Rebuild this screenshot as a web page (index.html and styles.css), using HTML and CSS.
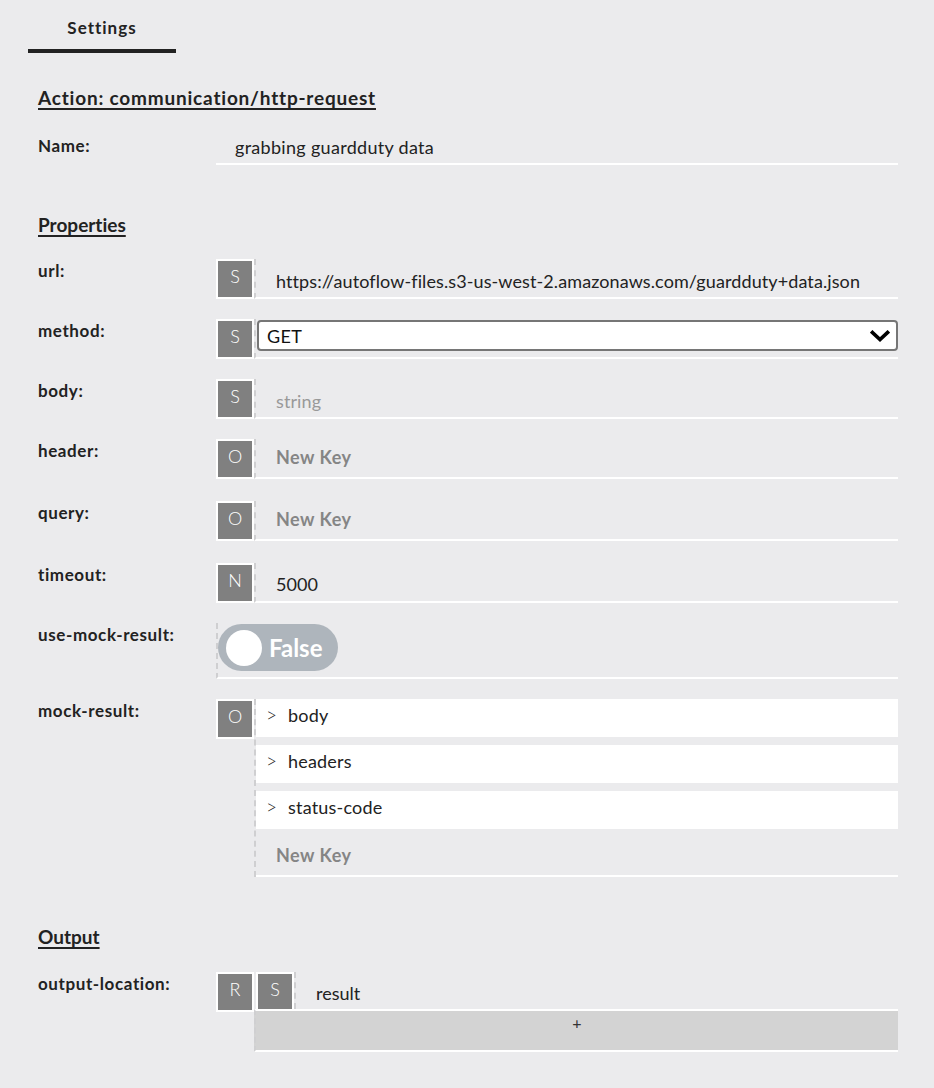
FILE: index.html
```html
<!DOCTYPE html>
<html lang="en">
<head>
<meta charset="utf-8">
<title>Settings</title>
<link rel="stylesheet" href="styles.css">
</head>
<body>
<div class="tabs"><div class="tab">Settings</div></div>
<div class="content">
  <h2 class="section-title action-title">Action: communication/http-request</h2>

  <div class="name-row">
    <div class="label">Name:</div>
    <div class="plain-field">grabbing guardduty data</div>
  </div>

  <h2 class="section-title props-title">Properties</h2>

  <div class="row">
    <div class="label">url:</div>
    <div class="control">
      <span class="badge">S</span>
      <div class="field text-field">https://autoflow-files.s3-us-west-2.amazonaws.com/guardduty+data.json</div>
    </div>
  </div>

  <div class="row">
    <div class="label">method:</div>
    <div class="control">
      <span class="badge">S</span>
      <div class="field select-field">
        <div class="select">
          <span>GET</span>
          <svg class="chevron" width="20" height="12" viewBox="0 0 20 12"><polyline points="2.5,2.5 10,9.5 17.5,2.5" fill="none" stroke="#000" stroke-width="3.6" stroke-linecap="square"/></svg>
        </div>
      </div>
    </div>
  </div>

  <div class="row">
    <div class="label">body:</div>
    <div class="control">
      <span class="badge">S</span>
      <div class="field text-field placeholder">string</div>
    </div>
  </div>

  <div class="row key-row">
    <div class="label">header:</div>
    <div class="control">
      <span class="badge">O</span>
      <div class="field key-field"><span class="new-key">New Key</span></div>
    </div>
  </div>

  <div class="row key-row">
    <div class="label">query:</div>
    <div class="control">
      <span class="badge">O</span>
      <div class="field key-field"><span class="new-key">New Key</span></div>
    </div>
  </div>

  <div class="row">
    <div class="label">timeout:</div>
    <div class="control">
      <span class="badge">N</span>
      <div class="field text-field num">5000</div>
    </div>
  </div>

  <div class="row">
    <div class="label">use-mock-result:</div>
    <div class="control">
      <div class="field toggle-field">
        <div class="toggle"><span class="knob"></span><span class="toggle-text">False</span></div>
      </div>
    </div>
  </div>

  <div class="row">
    <div class="label">mock-result:</div>
    <div class="control">
      <span class="badge">O</span>
      <div class="object-list">
        <div class="obj-item"><span class="caret">&gt;</span>body</div>
        <div class="obj-item"><span class="caret">&gt;</span>headers</div>
        <div class="obj-item"><span class="caret">&gt;</span>status-code</div>
        <div class="obj-new"><span class="new-key">New Key</span></div>
      </div>
    </div>
  </div>

  <h2 class="section-title output-title">Output</h2>

  <div class="row">
    <div class="label">output-location:</div>
    <div class="control">
      <span class="badge">R</span>
      <div class="out-col">
        <div class="out-top">
          <span class="badge">S</span>
          <div class="out-value">result</div>
        </div>
        <div class="add-bar">+</div>
      </div>
    </div>
  </div>
</div>
</body>
</html>
```

FILE: styles.css
```css
* { box-sizing: border-box; }

body {
  margin: 0;
  background: #ebebed;
  font-family: Lato, "Noto Sans", sans-serif;
  font-variant-ligatures: none;
  color: #222;
}

.tabs {
  padding-left: 28px;
  display: flex;
}

.tab {
  width: 148px;
  padding: 17px 0 10px;
  line-height: 22px;
  text-align: center;
  font-weight: 700;
  font-size: 17px;
  letter-spacing: 1px;
  color: #222;
  border-bottom: 4px solid #222;
}

.content {
  padding: 0 36px 40px 38px;
}

.section-title {
  margin: 0;
  font-size: 19px;
  line-height: 24px;
  font-weight: 700;
  text-decoration: underline;
  text-decoration-thickness: 2px;
  text-underline-offset: 3px;
  color: #222;
}

.action-title { margin-top: 33px; letter-spacing: 0.8px; }
.props-title { margin-top: 48px; margin-bottom: 22px; }
.output-title { margin-top: 48px; margin-bottom: 23px; }

.label {
  width: 178px;
  flex: none;
  font-size: 17px;
  font-weight: 700;
  letter-spacing: 0.6px;
  line-height: 24px;
  color: #222;
}

.name-row {
  display: flex;
  margin-top: 24px;
}

.plain-field {
  flex: 1;
  padding: 1px 0 4px 19px;
  line-height: 24px;
  font-size: 18px;
  letter-spacing: 0.3px;
  border-bottom: 2px solid #fff;
}

.row {
  display: flex;
  margin-bottom: 20px;
}

.row.key-row { margin-bottom: 22px; }

.control {
  flex: 1;
  display: flex;
  align-items: flex-start;
}

.badge {
  flex: none;
  width: 38px;
  height: 40px;
  border: 2px solid #fff;
  background: #808080;
  color: #fff;
  font-size: 18px;
  font-weight: 300;
  line-height: 30px;
  text-align: center;
}

.field {
  flex: 1;
  height: 40px;
  border-left: 2px dashed #cfcfd1;
  border-bottom: 2px solid #fff;
  font-size: 18px;
  line-height: 24px;
}

.text-field {
  padding: 10px 0 0 20px;
  white-space: nowrap;
  letter-spacing: 0.1px;
}

.text-field.num { padding-top: 9px; }

.placeholder { color: #999; }

.key-field { padding: 6px 0 0 20px; }

.new-key {
  color: #858585;
  font-weight: 700;
  font-size: 18px;
  letter-spacing: 0.5px;
}

.select-field {
  padding: 1px 0 0 1px;
}

.select {
  height: 31px;
  background: #fff;
  border: 2px solid #767676;
  border-radius: 4px;
  display: flex;
  align-items: center;
  justify-content: space-between;
  padding: 0 6px 0 8px;
  font-size: 18px;
  letter-spacing: 0.4px;
  color: #111;
}

.chevron { display: block; }

.toggle-field {
  height: 56px;
  padding: 1px 0 0 0;
  border-left: 2px dashed #cfcfd1;
}

.toggle {
  width: 120px;
  height: 47px;
  border-radius: 24px;
  background: #aeb5bc;
  display: flex;
  align-items: center;
  padding-left: 8px;
  gap: 7px;
}

.knob {
  width: 36px;
  height: 36px;
  border-radius: 50%;
  background: #fff;
  flex: none;
}

.toggle-text {
  color: #fff;
  font-weight: 700;
  font-size: 24px;
}

.object-list {
  flex: 1;
  display: flex;
  flex-direction: column;
  gap: 8px;
  border-left: 2px dashed #cfcfd1;
}

.obj-item {
  background: #fff;
  height: 38px;
  padding: 4px 0 0 10px;
  font-size: 18px;
  letter-spacing: 0.2px;
  line-height: 24px;
  color: #222;
}

.caret {
  display: inline-block;
  width: 22px;
  font-size: 19px;
  font-weight: 300;
}

.obj-new {
  height: 40px;
  padding: 6px 0 0 20px;
  line-height: 24px;
  border-bottom: 2px solid #fff;
}

.out-col {
  flex: 1;
  display: flex;
  flex-direction: column;
}

.out-top {
  display: flex;
  padding-left: 2px;
}

.out-top .badge { height: 37px; border-bottom: 0; }

.out-value {
  flex: 1;
  height: 37px;
  border-left: 2px dashed #cfcfd1;
  padding: 9px 0 0 20px;
  font-size: 18px;
  line-height: 24px;
}

.add-bar {
  height: 43px;
  background: #d3d3d3;
  border-top: 2px solid #fff;
  border-bottom: 2px solid #fff;
  border-left: 2px dashed #cfcfd1;
  text-align: center;
  font-size: 16px;
  line-height: 24px;
  color: #333;
}
```
